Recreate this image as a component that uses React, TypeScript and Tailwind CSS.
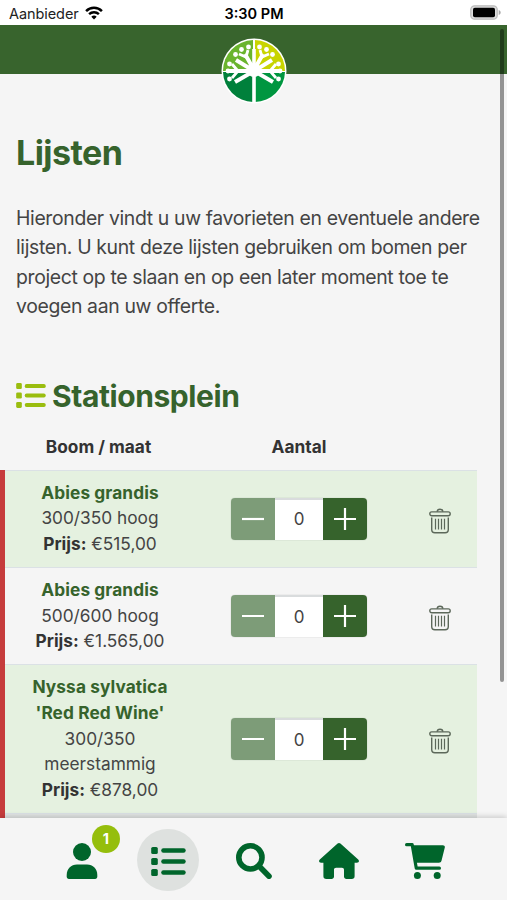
import { Fragment } from "react";

interface Tree {
  id: number;
  name: string[];
  size: string[];
  price: string;
  amount: number;
}

const trees: Tree[] = [
  { id: 1, name: ["Abies grandis"], size: ["300/350 hoog"], price: "€515,00", amount: 0 },
  { id: 2, name: ["Abies grandis"], size: ["500/600 hoog"], price: "€1.565,00", amount: 0 },
  { id: 3, name: ["Nyssa sylvatica", "'Red Red Wine'"], size: ["300/350", "meerstammig"], price: "€878,00", amount: 0 },
];

const intro = [
  "Hieronder vindt u uw favorieten en eventuele andere",
  "lijsten. U kunt deze lijsten gebruiken om bomen per",
  "project op te slaan en op een later moment toe te",
  "voegen aan uw offerte.",
];

function Lines({ items }: { items: string[] }) {
  return (
    <>
      {items.map((item, i) => (
        <Fragment key={i}>
          {i > 0 && <br />}
          {item}
        </Fragment>
      ))}
    </>
  );
}

function StatusBar() {
  return (
    <div className="grid h-[25px] shrink-0 grid-cols-3 items-center bg-white pt-[3px] pr-[6px] pl-[9px] text-[14.5px] leading-none text-[#222]">
      <div className="flex items-center gap-[6px]">
        <span className="tracking-[-0.005em]">Aanbieder</span>
        <svg viewBox="0 0 18 14" className="mb-[2px] h-[14px] w-[18px]" fill="none" stroke="#000">
          <path d="M1.1 5.1a11.2 11.2 0 0 1 15.8 0" strokeWidth="2.5" />
          <path d="M4.1 8.2a7 7 0 0 1 9.8 0" strokeWidth="2.4" />
          <path d="M9 13.6 6.3 10.8a3.9 3.9 0 0 1 5.4 0Z" fill="#000" stroke="none" />
        </svg>
      </div>
      <span className="pr-[2px] text-center font-semibold text-black">3:30 PM</span>
      <svg viewBox="0 0 31 15" className="mb-[3px] h-[15px] w-[31px] justify-self-end">
        <rect x="0.8" y="0.8" width="26.4" height="13.4" rx="3.8" fill="#ddd" stroke="#bbb" strokeWidth="1.3" />
        <rect x="3" y="2.8" width="22" height="9.4" rx="1.8" fill="#000" />
        <path d="M28.7 5v5c1.3-.5 2-1.5 2-2.5s-.7-2-2-2.5Z" fill="#aaa" />
      </svg>
    </div>
  );
}

function Logo() {
  return (
    <svg viewBox="0 0 66 66" className="h-[66px] w-[66px]">
      <circle cx="33" cy="33" r="32.5" fill="#fff" />
      <path d="M32 2v31H2A31 31 0 0 1 32 2Z" fill="#6ab42d" />
      <path d="M34 2v31h30A31 31 0 0 0 34 2Z" fill="#c8d400" />
      <path d="M2 34h30v30A31 31 0 0 1 2 34Z" fill="#00803b" />
      <path d="M64 34H34v30a31 31 0 0 0 30-30Z" fill="#009640" />
      <path d="M33 11v54" stroke="#fff" strokeWidth="3.6" />
      <circle cx="33" cy="32" r="7" fill="#fff" />
      <g stroke="#fff" fill="none">
        <path d="M33 32 24 16M33 33 15 22M33 33H8M33 33 14 44" strokeWidth="4" />
        <path d="m18 16 7 3 2-7M11 26l6 7-6 7" strokeWidth="2.8" />
        <path d="M33 32 42 16M33 33l18-11M33 33h25M33 33l19 11" strokeWidth="4" />
        <path d="m48 16-7 3-2-7M55 26l-6 7 6 7" strokeWidth="2.8" />
      </g>
      <g fill="#fff">
        <circle cx="27.5" cy="9" r="2.4" />
        <circle cx="20.5" cy="11.5" r="2.4" />
        <circle cx="14.5" cy="16.5" r="2.4" />
        <circle cx="8.5" cy="26" r="2.4" />
        <circle cx="7" cy="33" r="2.4" />
        <circle cx="8.5" cy="41" r="2.4" />
        <circle cx="38.5" cy="9" r="2.4" />
        <circle cx="45.5" cy="11.5" r="2.4" />
        <circle cx="51.5" cy="16.5" r="2.4" />
        <circle cx="57.5" cy="26" r="2.4" />
        <circle cx="59" cy="33" r="2.4" />
        <circle cx="57.5" cy="41" r="2.4" />
      </g>
    </svg>
  );
}

function ListIcon({ className }: { className: string }) {
  return (
    <svg viewBox="0 0 35 29" className={className} fill="currentColor">
      <rect x="0.2" y="0" width="6.6" height="7" rx="1.6" />
      <rect x="0.2" y="11" width="6.6" height="7" rx="1.6" />
      <rect x="0.2" y="22" width="6.6" height="7" rx="1.6" />
      <rect x="10.2" y="1.2" width="24.5" height="4.6" rx="2.2" />
      <rect x="10.2" y="12.2" width="24.5" height="4.6" rx="2.2" />
      <rect x="10.2" y="23.2" width="24.5" height="4.6" rx="2.2" />
    </svg>
  );
}

function UserIcon() {
  return (
    <svg viewBox="0 0 32 36" className="h-[36px] w-[32px]" fill="currentColor">
      <circle cx="16" cy="9" r="9" />
      <path d="M11 21.4h10c6 0 10.3 4.4 10.3 10.6v1.8c0 1.2-.9 2.2-2.2 2.2H2.9C1.6 36 .7 35 .7 33.8V32C.7 25.8 5 21.4 11 21.4Z" />
    </svg>
  );
}

function SearchIcon() {
  return (
    <svg viewBox="0 0 36 36" className="h-[36px] w-[36px]" fill="none" stroke="currentColor" strokeWidth="5.6">
      <circle cx="14.4" cy="14.4" r="11.6" />
      <path d="m23 23 10 10.2" strokeLinecap="round" />
    </svg>
  );
}

function HomeIcon() {
  return (
    <svg viewBox="0 0 40 36" className="h-[36px] w-[40px]" fill="currentColor">
      <path d="M18.6.6c.8-.7 2-.7 2.8 0l17.8 15.8c1.4 1.3.7 3.3-1.3 3.3h-2.3v13.5c0 1.7-1.1 2.8-2.8 2.8h-5.3c-1.5 0-2.5-1-2.5-2.5v-6.7c0-1.3-.8-2.1-2.1-2.1h-5.8c-1.3 0-2.1.8-2.1 2.1v6.7c0 1.5-1 2.5-2.5 2.5H7.2c-1.7 0-2.8-1.1-2.8-2.8V19.7H2.1c-2 0-2.7-2-1.3-3.3Z" />
    </svg>
  );
}

function CartIcon() {
  return (
    <svg viewBox="0 0 40 36" className="h-[36px] w-[40px]">
      <path
        d="M1.6 1.7h5.6l4.1 23.5h23.1"
        fill="none"
        stroke="currentColor"
        strokeWidth="3.2"
        strokeLinecap="round"
        strokeLinejoin="round"
      />
      <path d="M7 2.2h30.8c1.5 0 2.3 1 2 2.4l-3.3 13.2c-.3 1.3-1.3 2-2.6 2H10Z" fill="currentColor" />
      <circle cx="12.4" cy="32.4" r="3.5" fill="currentColor" />
      <circle cx="32.2" cy="32.4" r="3.5" fill="currentColor" />
    </svg>
  );
}

function TrashIcon() {
  return (
    <svg viewBox="0 0 22 26" className="h-[26px] w-[22px]" fill="none" stroke="#5c685a" strokeWidth="1.4">
      <path d="M8.2 3.8C8.2 2 9.2 1.2 11 1.2s2.8.8 2.8 2.6" />
      <rect x="0.8" y="3.9" width="20.4" height="3.8" rx="1.9" />
      <path d="M2.7 9.5v12a3.2 3.2 0 0 0 3.2 3.2h10.2a3.2 3.2 0 0 0 3.2-3.2v-12" />
      <path d="M6.5 10.8v10.8M9.5 10.8v10.8M12.5 10.8v10.8M15.5 10.8v10.8" strokeWidth="1.2" />
    </svg>
  );
}

function Stepper({ amount }: { amount: number }) {
  return (
    <div className="flex h-[42px] w-[136px] overflow-hidden rounded-[4px] text-white shadow-[0_0_1px_rgba(0,0,0,0.35)]">
      <button className="flex w-[44px] items-center justify-center bg-[#7d9c78]">
        <svg viewBox="0 0 22 22" className="h-[22px] w-[22px]" stroke="currentColor" strokeWidth="2.2">
          <path d="M0 11h22" />
        </svg>
      </button>
      <span className="flex w-[48px] items-center justify-center border-t-2 border-[#d9dcdd] bg-white pt-[1px] text-[17px] text-[#444]">
        {amount}
      </span>
      <button className="flex w-[44px] items-center justify-center bg-[#36632c]">
        <svg viewBox="0 0 22 22" className="h-[22px] w-[22px]" stroke="currentColor" strokeWidth="2.2">
          <path d="M0 11h22M11 0v22" />
        </svg>
      </button>
    </div>
  );
}

function TreeTable() {
  return (
    <div className="w-[477px] text-[17.3px] leading-[25.7px]">
      <div className="flex h-[36px] pl-[5px] text-center font-bold text-[#333]">
        <span className="w-[187px]">Boom / maat</span>
        <span className="w-[214px]">Aantal</span>
      </div>
      <div className="border-l-[5px] border-[#c63c3c]">
        {trees.map((tree) => (
          <div
            key={tree.id}
            className="flex items-center border-t border-[#dbe1e5] pt-[9.1px] pb-[10.1px] text-[#444] odd:bg-[#e5f1e0]"
          >
            <p className="w-[190px] text-center">
              <strong className="font-bold tracking-[0.005em] text-[#36632c]">
                <Lines items={tree.name} />
              </strong>
              <br />
              <Lines items={tree.size} />
              <br />
              <strong className="font-bold text-[#333]">Prijs:</strong> {tree.price}
            </p>
            <div className="flex w-[208px] justify-center pt-[1px]">
              <Stepper amount={tree.amount} />
            </div>
            <div className="flex flex-1 justify-center pt-[5px]">
              <TrashIcon />
            </div>
          </div>
        ))}
        <div className="h-[30px] border-t border-[#dbe1e5] bg-[#e1e4e3]" />
      </div>
    </div>
  );
}

function BottomNav() {
  return (
    <nav className="relative flex h-[82px] shrink-0 items-center bg-[#f5f5f5] pt-[2px] pl-[40px] text-[#00652b] shadow-[0_-1px_6px_rgba(0,0,0,0.2)]">
      <div className="relative flex w-[84px] justify-center pt-[2px]">
        <UserIcon />
        <span className="absolute -top-[16px] left-[52px] flex h-[28px] w-[28px] items-center justify-center rounded-full bg-[#95be0c] text-[14.5px] font-bold text-white">
          1
        </span>
      </div>
      <div className="flex w-[88px] justify-center">
        <span className="flex h-[62px] w-[62px] items-center justify-center rounded-full bg-[#dee1df] pt-[2px]">
          <ListIcon className="h-[29px] w-[35px]" />
        </span>
      </div>
      <div className="flex w-[84px] justify-center pt-[2px]">
        <SearchIcon />
      </div>
      <div className="flex w-[86px] justify-center pt-[2px]">
        <HomeIcon />
      </div>
      <div className="flex w-[86px] justify-center pt-[2px]">
        <CartIcon />
      </div>
    </nav>
  );
}

export default function App() {
  return (
    <div className="relative flex h-[900px] w-[507px] flex-col overflow-hidden bg-[#f5f5f5] font-['Inter',sans-serif]">
      <StatusBar />
      <header className="flex h-[49px] shrink-0 justify-center bg-[#38642d] pt-[13px]">
        <Logo />
      </header>

      <main className="min-h-0 flex-1 overflow-hidden">
        <h1 className="mt-[58px] pl-[16px] text-[34px] leading-[41px] font-bold tracking-[-0.016em] text-[#36632c]">
          Lijsten
        </h1>
        <p className="mt-[31px] pl-[16px] text-[19.4px] leading-[29.4px] tracking-[-0.018em] whitespace-nowrap text-[#444]">
          <Lines items={intro} />
        </p>
        <h2 className="mt-[54px] mb-[18px] flex items-center gap-[6px] pl-[16px] text-[30px] leading-[40px] font-bold tracking-[-0.014em] text-[#36632c]">
          <ListIcon className="h-[25px] w-[30px] text-[#9abd0f]" />
          Stationsplein
        </h2>
        <TreeTable />
      </main>

      <BottomNav />
      <div className="absolute top-[29px] right-[3px] h-[653px] w-[4px] rounded-full bg-black/40" />
    </div>
  );
}
